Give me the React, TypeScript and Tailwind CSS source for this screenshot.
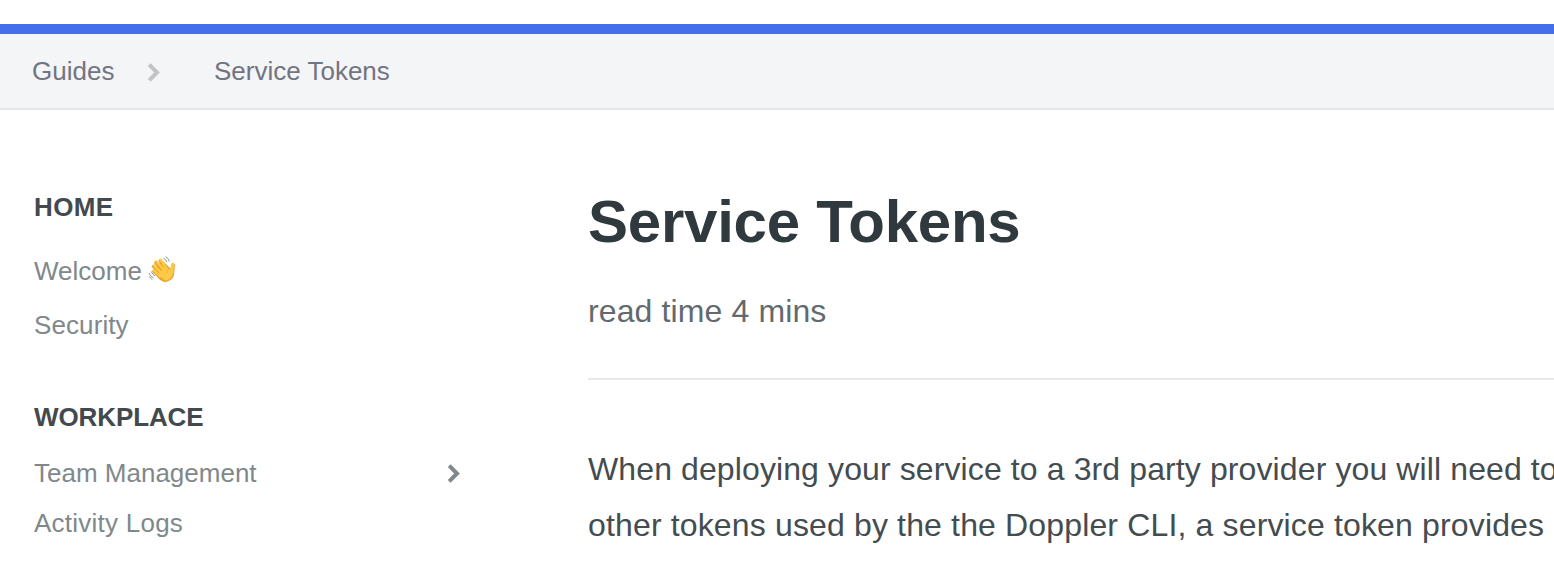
import type { ReactNode } from "react";

function Chevron({ className }: { className: string }) {
  return (
    <svg viewBox="0 0 14 20" className={className} fill="none" stroke="currentColor" strokeWidth="4" strokeLinecap="butt" strokeLinejoin="miter">
      <path d="M2.2 2.7 10 10.5 2.2 18.3" />
    </svg>
  );
}

function WavingHand() {
  return (
    <svg viewBox="0 0 28 28" className="-mt-0.5 h-7 w-7 shrink-0" fill="none" strokeLinecap="round" strokeLinejoin="round" role="img" aria-label="waving hand">
      <path d="M5.2 14.8 10 21.6Q13.5 26.2 18 26Q25.4 24 26 18.5L27 8.6Q25.4 6.2 23.6 7.6L22.4 12.6 14 4.2Z" fill="#eba62b" />
      <path d="M12 21.5 5.8 15.2M14 18.6 5.4 10.4M16 15.6 7.8 6.6M18.5 13.6 12.3 4.9" stroke="#e5a02a" strokeWidth="3.2" />
      <path d="M12.2 20.5 6.2 14.4M14 17.5 5.9 9.4M16.4 14.6 8.3 5.4M18.9 13.4 12.6 3.9" stroke="#ffca45" strokeWidth="2.5" />
      <path d="M10.5 17.5 18 10.8Q21 13.5 22.6 13.4L23.6 8.2Q24.8 6 26 8L25.2 16.5Q23.8 23.2 18 24.4Q14.5 24 10.5 18Z" fill="#ffca45" />
      <path d="M20.8 13Q18.7 14.4 18.9 16.8" stroke="#eeae2e" strokeWidth="0.8" />
      <path d="M15.8 2.2Q18 3.3 18.7 5.8M18 .8Q20.6 2.2 21.2 5.2M1 17.2Q2.2 20.4 5.2 21.9M1.6 20.8Q2.4 22.4 4 23.3M3.4 15.8Q4.2 18.4 6.7 19.8" stroke="#929698" strokeWidth="1" />
    </svg>
  );
}

export default function App() {
  return (
    <div className="flex h-[584px] w-full flex-col overflow-hidden bg-white pt-6 font-['Liberation_Sans',Arial,sans-serif] whitespace-nowrap">
      <div className="h-2.5 shrink-0 bg-[#456eea]" />
      <nav className="flex h-[76px] shrink-0 items-center border-b-2 border-[#e4e6e9] bg-[#f4f5f7] pl-8 text-[26px] text-[#727482]">
        <a className="w-[115px]">Guides</a>
        <Chevron className="mt-px mr-[53px] h-5 w-3.5 text-[#c2c3c5]" />
        <a>Service Tokens</a>
      </nav>
      <div className="flex min-h-0 flex-1">
        <aside className="w-[588px] shrink-0 pt-[70px] pl-[34px] text-[26px] text-[#80888b]">
          <NavHeading className="tracking-[0.4px]">HOME</NavHeading>
          <ul className="mt-2.5 leading-[54px]">
            <li className="flex items-center">
              <span className="w-[114px]">Welcome</span>
              <WavingHand />
            </li>
            <li className="tracking-[0.1px]">Security</li>
          </ul>
          <NavHeading className="mt-[38px] tracking-[-0.1px]">WORKPLACE</NavHeading>
          <ul className="mt-1 leading-[50px]">
            <li className="flex items-center">
              <span className="w-[413px]">Team Management</span>
              <Chevron className="h-5 w-3.5" />
            </li>
            <li className="tracking-[0.24px]">Activity Logs</li>
          </ul>
        </aside>
        <main className="min-w-0 flex-1 pt-[72px]">
          <h1 className="text-[60px] leading-[80px] font-bold tracking-[-0.24px] text-[#30393e]">Service Tokens</h1>
          <p className="mt-[29px] text-[32px] leading-10 tracking-[0.12px] text-[#626a6f]">read time 4 mins</p>
          <hr className="mt-[47px] border-t-2 border-[#e9eaeb]" />
          <p className="mt-[61px] text-[32px] leading-[56px] text-[#444c50]">
            <span className="block tracking-[0.11px]">When deploying your service to a 3rd party provider you will need to</span>
            <span className="block tracking-[0.15px]">other tokens used by the the Doppler CLI, a service token provides</span>
          </p>
        </main>
      </div>
    </div>
  );
}

function NavHeading({ children, className }: { children: ReactNode; className: string }) {
  return <h2 className={`text-[26px] leading-[54px] font-bold text-[#434a4e] ${className}`}>{children}</h2>;
}
